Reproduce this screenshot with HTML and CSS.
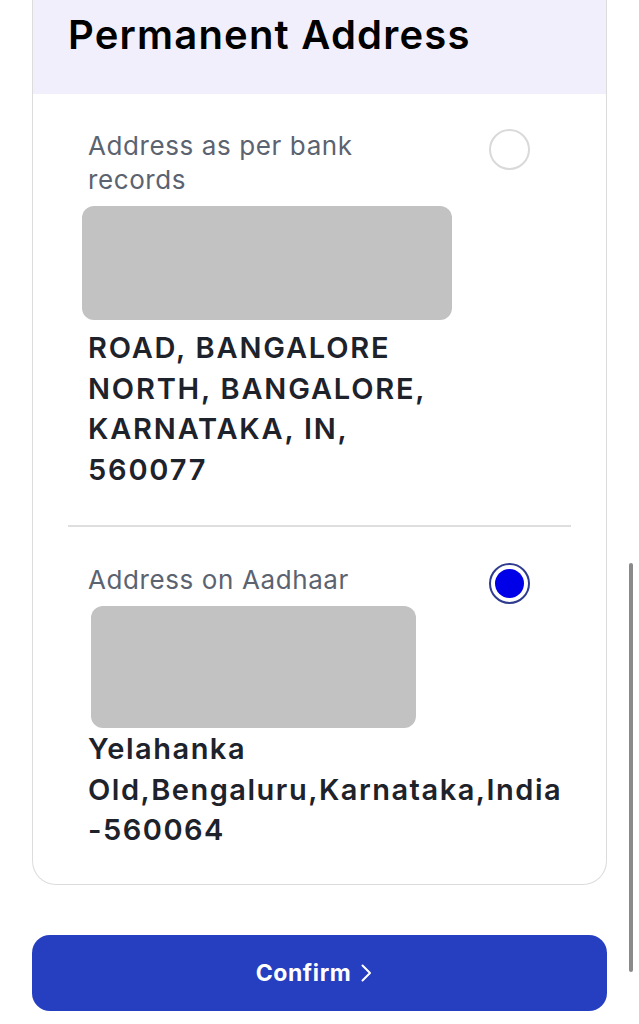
FILE: index.html
```html
<!DOCTYPE html>
<html lang="en">
<head>
<meta charset="utf-8">
<title>Permanent Address</title>
<link rel="stylesheet" href="styles.css">
</head>
<body>
<main class="page">
  <div class="card">
    <header class="card-header">
      <h1 class="title">Permanent Address</h1>
    </header>
    <section class="option option-first">
      <div class="option-head">
        <p class="label">Address as per bank records</p>
        <span class="radio"></span>
      </div>
      <div class="redact redact-bank"></div>
      <p class="addr">ROAD, BANGALORE NORTH, BANGALORE, KARNATAKA, IN, 560077</p>
    </section>
    <section class="option option-second">
      <div class="option-head">
        <p class="label">Address on Aadhaar</p>
        <span class="radio radio-checked"></span>
      </div>
      <div class="redact redact-aadhaar"></div>
      <p class="addr addr-aadhaar">Yelahanka Old,Bengaluru,Karnataka,India -560064</p>
    </section>
  </div>
  <button class="confirm" type="button">Confirm
    <svg class="chev" width="14" height="22" viewBox="0 0 14 22" aria-hidden="true"><path d="M3.5 3.5 L11 11 L3.5 18.5" fill="none" stroke="#fff" stroke-width="2" stroke-linecap="round" stroke-linejoin="round"/></svg>
  </button>
</main>
<div class="scrollbar"></div>
</body>
</html>
```
FILE: styles.css
```css
* { box-sizing: border-box; }
html, body { margin: 0; padding: 0; background: #ffffff; }
body {
  font-family: Inter, "Noto Sans", "Liberation Sans", sans-serif;
  width: 639px;
  height: 1024px;
  overflow: hidden;
  position: relative;
}
.page { padding: 0; }
.card {
  margin-left: 32px;
  width: 575px;
  border: 1.5px solid #dcdcdc;
  border-top: none;
  border-radius: 0 0 24px 24px;
  background: #fff;
}
.card-header {
  background: #f2effc;
  height: 94px;
  padding: 11px 0 0 35px;
}
.title {
  margin: 0;
  font-size: 40px;
  line-height: 47px;
  font-weight: 600;
  color: #000;
  letter-spacing: 1.2px;
}
.option {
  margin: 0 35px;
  padding: 35px 0 35px 20px;
}
.option-first { border-bottom: 2px solid #dedede; }
.option-second { padding: 36px 0 33px 20px; }
.option-head {
  display: flex;
  align-items: flex-start;
  justify-content: space-between;
  padding-right: 41px;
}
.label {
  margin: 0;
  width: 352px;
  font-size: 26px;
  line-height: 34px;
  color: #5c6370;
  font-weight: 400;
  letter-spacing: 0.6px;
}
.radio {
  flex: none;
  width: 41px;
  height: 41px;
  margin-bottom: -7px;
  border-radius: 50%;
  border: 2px solid #d9d9d9;
  position: relative;
}
.radio-checked {
  border-color: #2e3b8e;
}
.radio-checked::after {
  content: "";
  position: absolute;
  left: 4px;
  top: 4px;
  width: 29px;
  height: 29px;
  border-radius: 50%;
  background: #0000e8;
}
.redact {
  background: #c2c2c2;
  border-radius: 12px;
}
.redact-bank {
  margin: 9px 0 0 -6px;
  width: 370px;
  height: 114px;
}
.redact-aadhaar {
  margin: 9px 0 0 3px;
  width: 325px;
  height: 122px;
}
.addr {
  margin: 8px 0 0;
  width: 352px;
  font-size: 29px;
  line-height: 40.5px;
  font-weight: 600;
  color: #1d222b;
  letter-spacing: 1.8px;
}
.addr-aadhaar { margin-top: 1px; width: 380px; letter-spacing: 1.5px; }
.confirm {
  display: flex;
  align-items: center;
  justify-content: center;
  gap: 8px;
  margin: 50px 0 0 32px;
  width: 575px;
  height: 76px;
  border: none;
  border-radius: 18px;
  background: #253fc0;
  color: #fff;
  font-family: Inter, "Liberation Sans", sans-serif;
  font-size: 23px;
  font-weight: 700;
  letter-spacing: 0.6px;
  padding: 0 10px 0 0;
}
.chev { margin-top: 0; }
.scrollbar {
  position: absolute;
  left: 629px;
  top: 563px;
  width: 4px;
  height: 409px;
  border-radius: 2px;
  background: #8a8a8a;
}
```
